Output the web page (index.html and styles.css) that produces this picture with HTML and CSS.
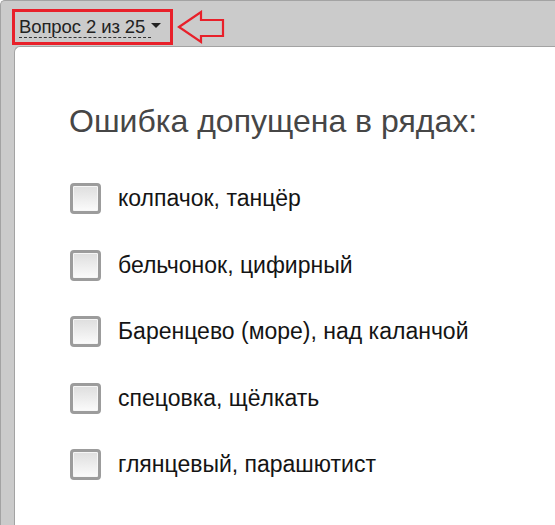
FILE: index.html
```html
<!DOCTYPE html>
<html lang="ru">
<head>
<meta charset="utf-8">
<link rel="stylesheet" href="styles.css">
</head>
<body>
<div class="frame">
  <div class="topbar">
    <div class="picker">
      <span class="picker-label">Вопрос 2 из 25</span>
      <span class="caret"></span>
    </div>
    <svg class="arrow" width="50" height="36" viewBox="0 0 50 36">
      <polygon points="3,17 25,2 25,10 47,10 47,26 25,26 25,32" fill="none" stroke="#e8202a" stroke-width="2.2" stroke-linejoin="miter"/>
    </svg>
  </div>
  <div class="panel">
    <h1 class="question">Ошибка допущена в рядах:</h1>
    <ul class="options">
      <li class="option"><span class="box"></span><span class="label">колпачок, танцёр</span></li>
      <li class="option"><span class="box"></span><span class="label">бельчонок, цифирный</span></li>
      <li class="option"><span class="box"></span><span class="label">Баренцево (море), над каланчой</span></li>
      <li class="option"><span class="box"></span><span class="label">спецовка, щёлкать</span></li>
      <li class="option"><span class="box"></span><span class="label">глянцевый, парашютист</span></li>
    </ul>
  </div>
</div>
</body>
</html>
```
FILE: styles.css
```css
html, body {
  margin: 0;
  padding: 0;
  height: 100%;
  overflow: hidden;
  background: #ffffff;
  font-family: "Liberation Sans", Arial, sans-serif;
}

.frame {
  box-sizing: border-box;
  min-height: 100%;
  width: 100%;
  background: #cbcbcb;
  border-top: 1px solid #a3a3a3;
  border-left: 1px solid #a3a3a3;
  border-top-left-radius: 5px;
  padding-left: 13px;
  display: flex;
  flex-direction: column;
}

.topbar {
  height: 45px;
  display: flex;
  align-items: flex-start;
  margin-left: -2px;
}

.picker {
  box-sizing: border-box;
  margin-top: 8px;
  width: 161px;
  height: 36px;
  border: 3px solid #e8202a;
  display: flex;
  align-items: center;
  padding-left: 4px;
  padding-top: 1px;
  color: #222;
  font-size: 18.5px;
  letter-spacing: -0.1px;
}

.picker-label {
  border-bottom: 1px dashed #333;
  padding-right: 6px;
  line-height: 20px;
}

.caret {
  width: 0;
  height: 0;
  border-left: 5px solid transparent;
  border-right: 5px solid transparent;
  border-top: 5px solid #222;
  margin-top: -4px;
}

.arrow {
  margin-left: 3px;
  margin-top: 9px;
}

.panel {
  flex: 1;
  background: #ffffff;
  border-top: 1px solid #a3a3a3;
  border-left: 1px solid #a3a3a3;
  border-top-left-radius: 6px;
  padding: 56px 0 0 54px;
}

.question {
  margin: 0 0 44px 0;
  font-weight: normal;
  font-size: 32px;
  line-height: 36px;
  color: #464646;
}

.options {
  list-style: none;
  margin: 0;
  padding: 0 0 0 1px;
  display: flex;
  flex-direction: column;
  gap: 35.5px;
}

.option {
  display: flex;
  align-items: center;
  height: 31px;
}

.box {
  box-sizing: border-box;
  width: 31px;
  height: 31px;
  border: 3px solid #9c9c9c;
  border-radius: 4px;
  background: linear-gradient(#dedede, #fbfbfb);
  box-shadow: inset 0 0 0 1px #f6f6f6;
  flex-shrink: 0;
}

.label {
  margin-left: 17px;
  font-size: 23px;
  color: #141414;
}
```
